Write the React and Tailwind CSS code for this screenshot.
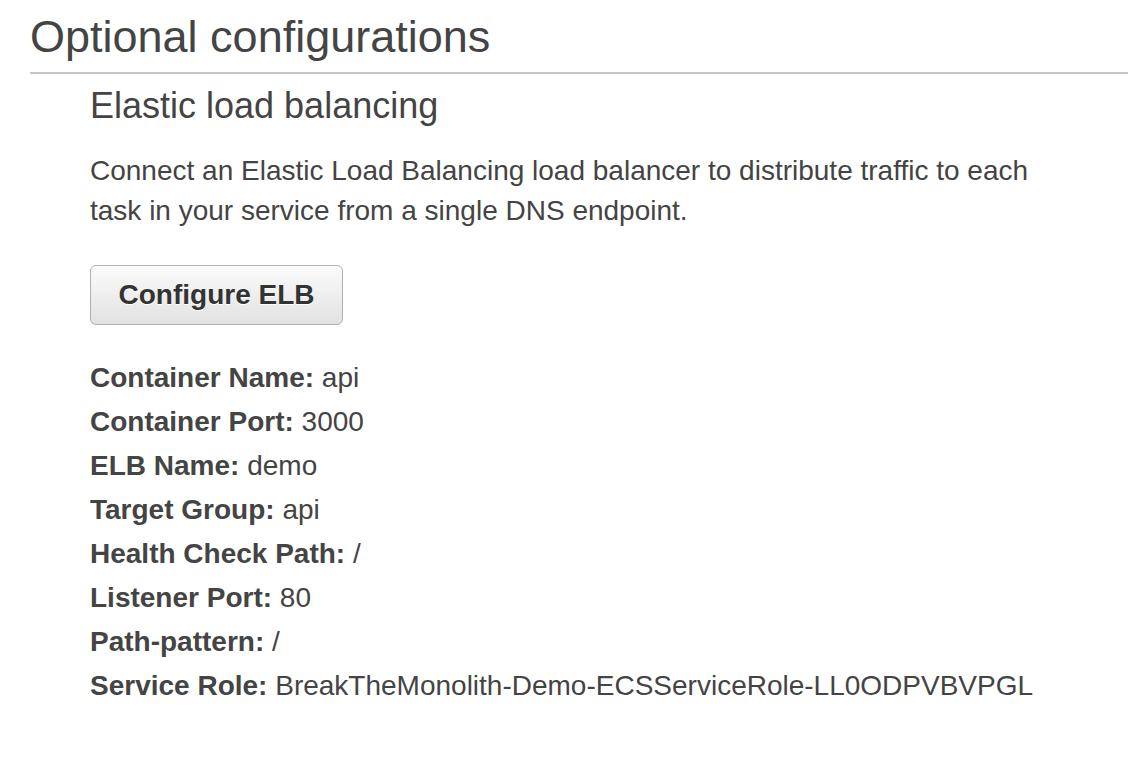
export default function App() {
  const rows = [
    ["Container Name:", "api"],
    ["Container Port:", "3000"],
    ["ELB Name:", "demo"],
    ["Target Group:", "api"],
    ["Health Check Path:", "/"],
    ["Listener Port:", "80"],
    ["Path-pattern:", "/"],
    ["Service Role:", "BreakTheMonolith-Demo-ECSServiceRole-LL0ODPVBVPGL"],
  ];
  return (
    <div
      className="w-[1128px] h-[764px] bg-white text-[#444] overflow-hidden"
      style={{ fontFamily: '"Liberation Sans", Arial, Helvetica, sans-serif' }}
    >
      <div className="ml-[30px]">
        <h2 className="pt-[15px] pb-[13px] text-[45px] leading-[44px] font-normal border-b-2 border-[#c8c8c8]">
          Optional configurations
        </h2>
        <div className="pl-[60px]">
          <h3 className="mt-[12px] text-[36px] leading-[40px] font-normal">
            Elastic load balancing
          </h3>
          <p className="mt-[25px] w-[980px] text-[28px] leading-[40px]">
            Connect an Elastic Load Balancing load balancer to distribute traffic to each task in your service from a single DNS endpoint.
          </p>
          <button
            className="mt-[34px] h-[60px] w-[253px] rounded-[6px] border border-[#b0b0b0] bg-gradient-to-b from-[#fbfbfb] to-[#e2e2e2] text-[28px] font-bold text-[#333] shadow-[inset_0_1px_0_#fff]"
            style={{ fontFamily: '"Liberation Sans", Arial, Helvetica, sans-serif', textShadow: "0 1px 0 #fff" }}
          >
            Configure ELB
          </button>
          <div className="mt-[31px] text-[28px] leading-[44px]">
            {rows.map(([k, v]) => (
              <div key={k}>
                <span className="font-bold">{k}</span> {v}
              </div>
            ))}
          </div>
        </div>
      </div>
    </div>
  );
}
